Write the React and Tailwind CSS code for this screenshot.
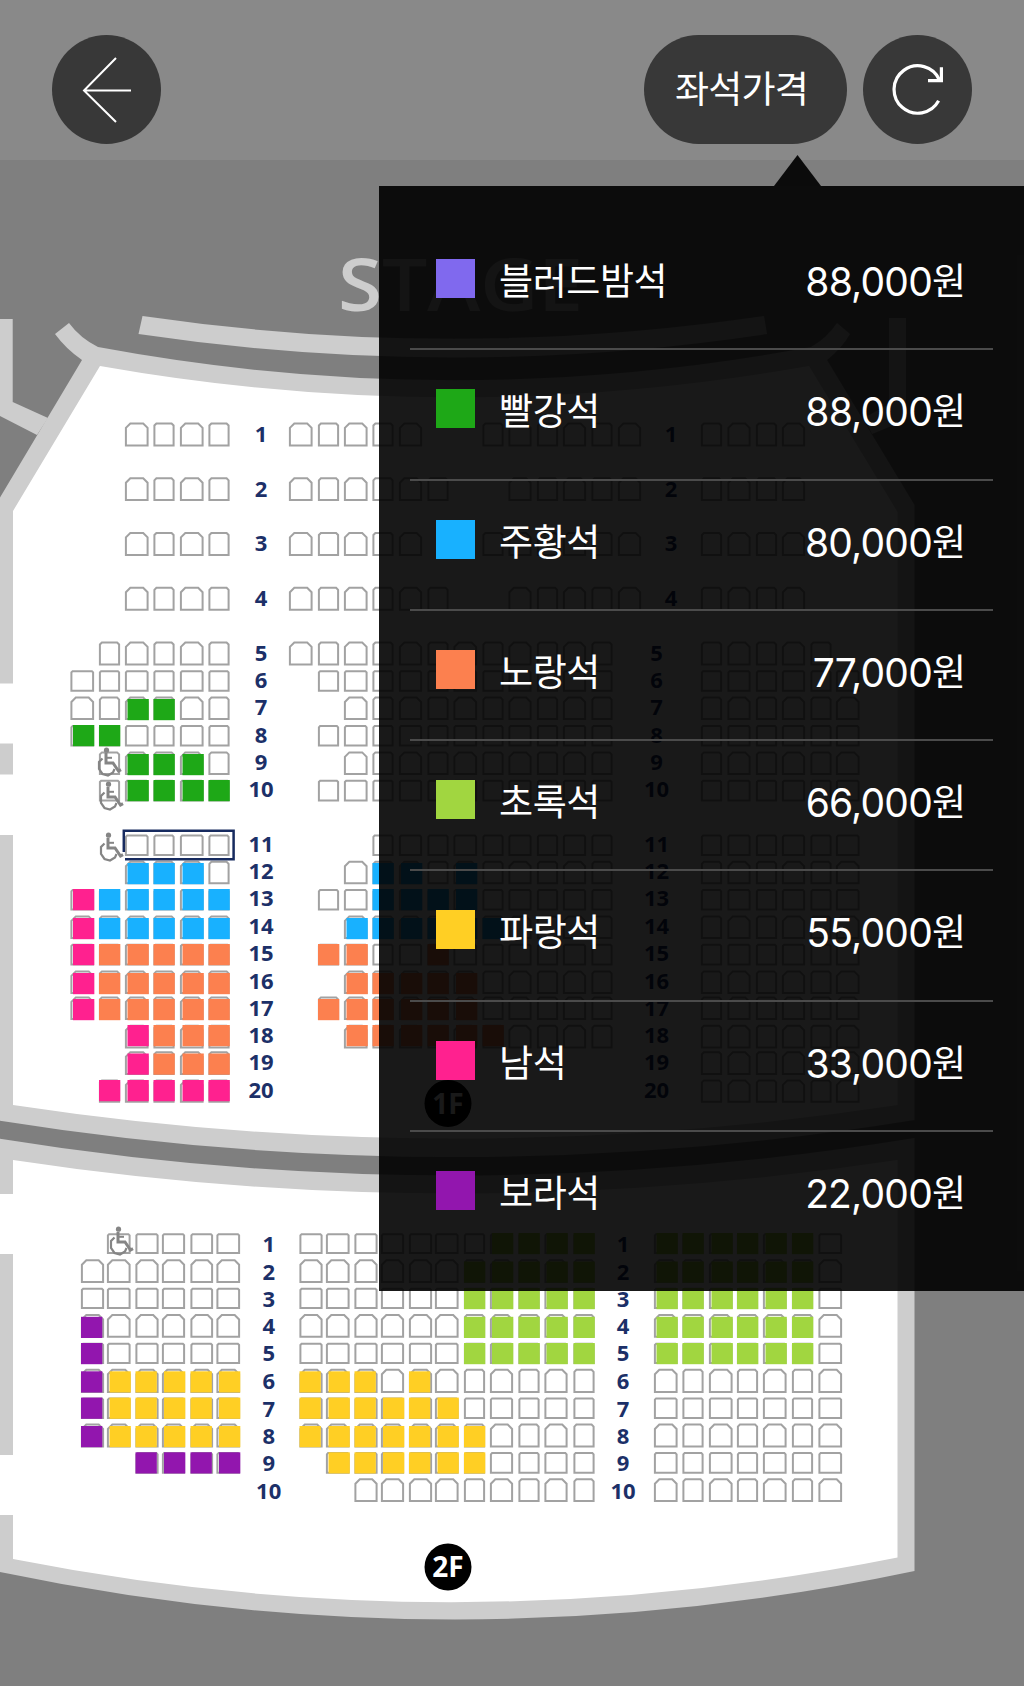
import React from 'react';

const COLORS = {
  G: '#1ea817',
  B: '#18b1ff',
  O: '#fc804f',
  L: '#a1d640',
  Y: '#ffcf24',
  P: '#ff218f',
  V: '#9216ae',
};

const PRICES = [
  { name: '블러드밤석', price: '88,000', color: 'bg-[#8069ee]' },
  { name: '빨강석', price: '88,000', color: 'bg-[#1ea817]' },
  { name: '주황석', price: '80,000', color: 'bg-[#18b1ff]' },
  { name: '노랑석', price: '77,000', color: 'bg-[#fc804f]' },
  { name: '초록석', price: '66,000', color: 'bg-[#a1d640]' },
  { name: '파랑석', price: '55,000', color: 'bg-[#ffcf24]' },
  { name: '남석', price: '33,000', color: 'bg-[#ff218f]' },
  { name: '보라석', price: '22,000', color: 'bg-[#9216ae]' },
];

// [x, width] of every seat column, from left to right
const LEFT_1F = [[70.5, 23.5], [99, 21], [125, 23.5], [153.5, 21], [180, 23.5], [208.5, 21]];
const MID_1F = [
  [289, 23.5], [318, 21], [344, 23.5], [372.5, 21], [399, 23], [427.5, 21], [453.5, 23.5],
  [482.5, 21], [508.5, 23], [537, 21], [563, 23], [591.5, 21], [618, 23],
];
const RIGHT_1F = [[701, 21], [727.5, 23], [756, 21], [782, 23], [810.5, 21], [836, 23.5]];

const LEFT_2F = [[81, 23], [107, 23.5], [135.5, 23], [162, 23], [190.5, 22.5], [216.5, 23.5]];
const MID_2F = [
  [299.5, 23], [326, 23.5], [354.5, 23], [381, 23], [409, 23], [435, 23.5],
  [464, 21], [490, 23], [518.5, 21], [544.5, 23], [573.5, 21],
];
const RIGHT_2F = [[654, 23.5], [682.5, 21], [709, 23.5], [737, 21], [763, 23.5], [792, 21], [818.5, 23.5]];

// "." no seat, "o" free seat, letters are price grades.
// columns: top, bottom, top of the grade mark, left, middle, right
const FLOOR_1 = [
  [422.7, 446.3, 425, '..oooo', 'ooooo..oooooo', 'oooo'],
  [477.5, 501, 480, '..oooo', 'oooooo..ooooo', 'oooo'],
  [532.2, 556, 535, '..oooo', 'ooooo..oooooo', 'oooo'],
  [587, 610.6, 589, '..oooo', 'oooooo..ooooo', 'oooo'],
  [641.7, 665.3, 644, '.ooooo', 'oooooooooooo', 'ooooo'],
  [670.4, 691.6, 670, 'oooooo', '.ooooooooooo', 'oooooo'],
  [696.8, 720, 699, 'ooGGoo', '..oooooooooo', 'oooooo'],
  [725.3, 746.5, 725, 'GGoooo', '.ooooooooooo', 'oooooo'],
  [751.6, 775, 754, '.oGGGo', '..oooooooooo', 'oooooo'],
  [780, 801.3, 780, '.oGGGG', '.ooooooooooo', 'oooooo'],
  [834.8, 856, 835, '..oooo', '...ooooooooo', 'oooooo'],
  [861, 884.2, 863, '..BBBo', '..oBBoBooooo', 'oooooo'],
  [889.3, 910.5, 889, 'PBBBBB', '.ooBBBBooooo', 'oooooo'],
  [915.6, 939, 918, 'PBBBBB', '..BBBBBBoooo', 'oooooo'],
  [944, 965.3, 944, 'POOOOO', '.OOooOoooooo', 'oooooo'],
  [970.6, 994, 973, 'POOOOO', '..OOOOOooooo', 'oooooo'],
  [996.6, 1020, 999, 'POOOOO', '.OOOOOOooooo', 'oooooo'],
  [1025, 1048.3, 1025, '..POOO', '..OOOOOOoooo', 'oooooo'],
  [1051.4, 1075, 1053.5, '..POOO', '', 'oooooo'],
  [1079.6, 1102.6, 1080, '.PPPPP', '', 'oooooo'],
];

const FLOOR_2 = [
  [1233.4, 1254, 1233, '.ooooo', 'oooooooLLLL', 'LLLLLLo'],
  [1259.5, 1283, 1261.5, 'oooooo', 'ooooooLLLLL', 'LLLLLLo'],
  [1288, 1309, 1288, 'oooooo', 'ooooooLLLLL', 'LLLLLLo'],
  [1314.3, 1337.6, 1316.8, 'Vooooo', 'ooooooLLLLL', 'LLLLLLo'],
  [1343, 1364, 1343, 'Vooooo', 'ooooooLLLLL', 'LLLLLLo'],
  [1369, 1393, 1371.3, 'VYYYYY', 'YYYoYoooooo', 'ooooooo'],
  [1397.6, 1418.8, 1397.6, 'VYYYYY', 'YYYYYYooooo', 'ooooooo'],
  [1423.8, 1447.4, 1426, 'VYYYYY', 'YYYYYYYoooo', 'ooooooo'],
  [1452.3, 1473.6, 1452.3, '..VVVV', '.YYYYYYoooo', 'ooooooo'],
  [1478.5, 1502, 1481, '', '..ooooooooo', 'ooooooo'],
];

const Seat = ({ x, w, top, bottom, mark, grade, alignLeft }) => {
  const l = x + 0.9;
  const r = x + w - 0.9;
  const t = top + 0.8;
  const b = bottom - 0.9;
  const tall = bottom - top > 22;
  const c = tall ? (w > 22 ? 4.4 : 2) : 1.2;
  return (
    <g>
      <path
        d={`M${l} ${b}V${t + c}L${l + c} ${t}H${r - c}L${r} ${t + c}V${b}Z`}
        fill="none"
        stroke="#a2a2a2"
        strokeWidth="2"
      />
      {grade !== 'o' && (
        <rect x={alignLeft ? x : x + w - 21} y={mark} width="21.3" height="21.2" fill={COLORS[grade]} />
      )}
    </g>
  );
};

const SeatRow = ({ row, blocks, second }) => {
  const [top, bottom, mark, ...seats] = row;
  return blocks.map((cols, i) =>
    [...seats[i]].map((grade, j) =>
      grade === '.' ? null : (
        <Seat
          key={`${i}-${j}`}
          x={cols[j][0]}
          w={cols[j][1]}
          top={top}
          bottom={bottom}
          mark={mark}
          grade={grade}
          alignLeft={second && i < 2 && j < 6 && j % 2 === 0}
        />
      )
    )
  );
};

const NUMBERS_1F = [442, 496.7, 551.4, 605.6, 660.5, 688, 715.2, 742.6, 769.6, 797, 851.6, 879.2, 906.4, 934, 961.2, 988.7, 1015.8, 1043, 1070.2, 1097.8];
const NUMBERS_2F = [1251.5, 1279.5, 1306.5, 1333.5, 1361, 1389, 1416.5, 1443.5, 1471, 1498.5];

const Wheelchair = ({ x, y }) => (
  <g transform={`translate(${x} ${y})`} fill="none" stroke="#858585">
    <circle cx="9.5" cy="3.2" r="2.6" fill="#858585" stroke="none" />
    <path d="M9 6V16H16L21.5 24L24 22.6" strokeWidth="3" />
    <path d="M9 10.8H15" strokeWidth="2" />
    <path d="M5.5 11.5L2 15V22L5.5 27L11 28.5L16 25.5L17.5 22" strokeWidth="2.2" />
  </g>
);

const FloorBadge = ({ y, label }) => (
  <g>
    <circle cx="448" cy={y} r="23.5" fill="#000" />
    <text x="448" y={y + 10.3} textAnchor="middle" fontSize="28" fontWeight="700" fill="#fff">
      {label}
    </text>
  </g>
);

const SeatMap = () => (
  <svg width="1024" height="1526" viewBox="0 160 1024 1526" className="block font-['Open_Sans',sans-serif]">
    <text x="338" y="311" fontSize="73" fontWeight="600" textLength="245" lengthAdjust="spacingAndGlyphs" fill="#cdcdcd">
      STAGE
    </text>

    {/* stage edge */}
    <path d="M142.5 316Q455 361.6 764 316L767 334Q455 381 138.5 334Z" fill="#cdcdcd" />

    {/* corridors beside the hall */}
    <path d="M0 319H12.7V402L48 418L37 435L0 416Z" fill="#cdcdcd" />
    <path d="M889 318H906V420L872 434L864 418L889 404Z" fill="#cdcdcd" />

    {/* 1F */}
    <path
      d="M69 323Q80 338 98 347Q455 413.4 811 347Q827 338 837 323L850 334Q842 348 827 360L914.5 505V1120Q455 1194 -4.5 1120V505L82 360Q66 349 55 334Z"
      fill="#cdcdcd"
    />
    <path d="M100 366Q455 428.8 809 366L897.5 512V1105Q455 1172 13 1105V511Z" fill="#fff" />

    {/* 2F */}
    <path d="M-4.5 1138Q455 1213 914.5 1138V1571Q455 1668 -4.5 1571Z" fill="#cdcdcd" />
    <path d="M13 1160Q455 1227 897.5 1160V1557.5Q455 1646 13 1559Z" fill="#fff" />

    {/* doors */}
    <path d="M0 683.5H14V743.5H0ZM0 774.5H14V835H0ZM0 1194H14V1254H0ZM0 1455H14V1515H0Z" fill="#fff" />

    {FLOOR_1.map((row, i) => (
      <SeatRow key={i} row={row} blocks={[LEFT_1F, MID_1F, RIGHT_1F]} />
    ))}
    {FLOOR_2.map((row, i) => (
      <SeatRow key={i} row={row} blocks={[LEFT_2F, MID_2F, RIGHT_2F]} second />
    ))}

    <path d="M123.8 852V830.7H233.6V859.3H125" fill="none" stroke="#172b5f" strokeWidth="2.5" />
    <Wheelchair x={97} y={747} />
    <Wheelchair x={99} y={781} />
    <Wheelchair x={99} y={832} />
    <Wheelchair x={109} y={1226} />

    <g fontSize="22" fontWeight="700" textAnchor="middle" fill="#1c3068">
      {NUMBERS_1F.map((y, i) => (
        <React.Fragment key={y}>
          <text x="261" y={y}>{i + 1}</text>
          <text x={i < 4 ? 671 : 656.5} y={y}>{i + 1}</text>
        </React.Fragment>
      ))}
      {NUMBERS_2F.map((y, i) => (
        <React.Fragment key={y}>
          <text x="268.7" y={y}>{i + 1}</text>
          <text x="623" y={y}>{i + 1}</text>
        </React.Fragment>
      ))}
    </g>

    <FloorBadge y={1103.5} label="1F" />
    <FloorBadge y={1567} label="2F" />
  </svg>
);

const Header = () => (
  <header className="flex h-40 items-start justify-between bg-[#898989] pt-[35px] pr-[52px] pl-[52px]">
    <button className="flex size-[109px] items-center justify-center rounded-full bg-[#383838]">
      <svg width="50" height="66" viewBox="0 0 50 66" fill="none" stroke="#fff" strokeWidth="2">
        <path d="M34 1L2 33.5L34 65M2 33.5H49" />
      </svg>
    </button>
    <div className="flex gap-4">
      <button className="flex h-[109px] w-[203px] items-center justify-center rounded-full bg-[#383838] pr-2 pb-1 text-[37px] tracking-[-0.8px] text-white">
        좌석가격
      </button>
      <button className="flex size-[109px] items-center justify-center rounded-full bg-[#383838]">
        <svg width="54" height="54" viewBox="0 0 54 54" fill="none" stroke="#fff" strokeWidth="3.2">
          <path d="M47.6 37.8A23.7 23.7 0 1 1 48.5 17" />
          <path d="M50.4 4.3V17.7H37" />
        </svg>
      </button>
    </div>
  </header>
);

const PricePanel = () => (
  <div className="absolute top-[155px] right-0 w-[645px]">
    <svg className="ml-[395px] block" width="47" height="31" viewBox="0 0 47 31">
      <path d="M23.5 0L47 31H0Z" fill="#0b0b0b" />
    </svg>
    <ul className="h-[1105px] bg-black/90 pr-[31px] pl-[31px] pt-[34px]">
      {PRICES.map(({ name, price, color }) => (
        <li
          key={name}
          className="flex h-[130.28px] items-start border-b-2 border-[#4b4b4b] pt-[39px] pr-[27px] pl-[26px] text-white last:border-0"
        >
          <span className={`size-[39px] shrink-0 ${color}`} />
          <span className="-mt-0.5 ml-6 text-[37px] leading-[44px] tracking-[-0.4px]">{name}</span>
          <span className="ml-auto flex text-[37px] leading-[44px]">
            <span className="mt-px font-['Inter'] text-[39px] tracking-[-0.8px]">{price}</span>
            <span className="-mt-0.5">원</span>
          </span>
        </li>
      ))}
    </ul>
  </div>
);

const App = () => {
  return (
    <div className="relative h-[1686px] w-[1024px] overflow-hidden bg-[#7f7f7f] font-['Noto_Sans_CJK_KR',sans-serif]">
      <Header />
      <SeatMap />
      <PricePanel />
    </div>
  );
};

export default App;
